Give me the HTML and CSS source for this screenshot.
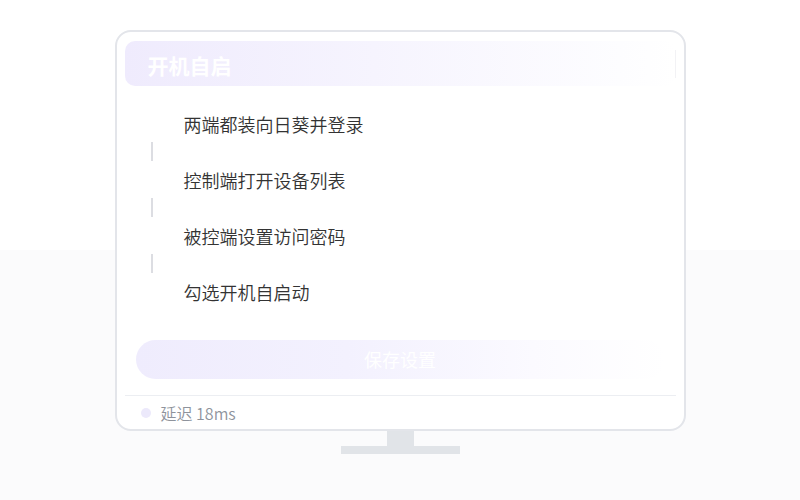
FILE: index.html
```html
<!DOCTYPE html>
<html lang="zh-CN">
<head>
	<meta charset="UTF-8">
	<title>开机自启</title>
	<link rel="stylesheet" href="styles.css">
</head>
<body>
	<div class="stage">
		<div class="monitor">
			<div class="panel-head">
				<span class="panel-title">开机自启</span>
				<span class="panel-extra"></span>
			</div>

			<ul class="steps">
				<li class="step">两端都装向日葵并登录</li>
				<li class="step-line"></li>
				<li class="step">控制端打开设备列表</li>
				<li class="step-line"></li>
				<li class="step">被控端设置访问密码</li>
				<li class="step-line"></li>
				<li class="step">勾选开机自启动</li>
			</ul>

			<a class="save-btn" href="#">保存设置</a>

			<div class="status">
				<span class="status-dot"></span>
				<span class="status-text">延迟 18ms</span>
			</div>
		</div>
		<div class="neck"></div>
		<div class="base"></div>
	</div>
</body>
</html>
```

FILE: styles.css
```css
*{
	margin: 0;
	padding: 0;
	box-sizing: border-box;
}
html,body{
	height: 100%;
}
body{
	font-family: "Noto Sans CJK SC", "Noto Sans", sans-serif;
	background: linear-gradient(#fff 0, #fff 250px, #fbfbfc 250px, #fbfbfc 100%);
	color: #333;
}
.stage{
	padding-top: 30px;
	display: flex;
	flex-direction: column;
	align-items: center;
}
.monitor{
	width: 571px;
	height: 401px;
	background: #fff;
	border: 2px solid #e3e5ea;
	border-radius: 16px;
	display: flex;
	flex-direction: column;
	padding: 9px 8px 0;
}
.panel-head{
	height: 45px;
	border-radius: 10px;
	background: linear-gradient(90deg, #efebfd 0%, #f6f4fe 45%, #fdfdff 90%, #fff 100%);
	display: flex;
	align-items: center;
	justify-content: space-between;
	padding: 0 0 0 23px;
}
.panel-title{
	color: #fff;
	font-size: 21px;
	font-weight: 700;
	line-height: 26px;
	margin-top: 2px;
}
.panel-extra{
	width: 1px;
	height: 28px;
	background: #f2f2f5;
}
.steps{
	list-style: none;
	margin-top: 26px;
	padding-left: 18px;
}
.step{
	font-size: 18px;
	font-weight: 350;
	line-height: 24px;
	padding-left: 41px;
	color: #333;
}
.step-line{
	width: 2px;
	height: 19px;
	margin: 6px 0 7px 8px;
	background: #dcdde2;
}
.save-btn{
	display: block;
	margin: 36px 11px 0;
	height: 39px;
	border-radius: 20px;
	background: linear-gradient(90deg, #efecfd 0%, #f3f1fe 40%, #fbfaff 75%, #fff 100%);
	color: #fff;
	font-size: 18px;
	line-height: 39px;
	text-align: center;
	text-decoration: none;
}
.status{
	margin-top: 16px;
	border-top: 1px solid #eceef2;
	height: 33px;
	display: flex;
	align-items: center;
	padding-left: 16px;
	padding-top: 2px;
}
.status-dot{
	width: 10px;
	height: 10px;
	border-radius: 50%;
	background: #ece9fb;
	margin-right: 10px;
}
.status-text{
	font-size: 16px;
	font-weight: 350;
	color: #8e939c;
}
.neck{
	width: 27px;
	height: 15px;
	background: #e1e4e8;
}
.base{
	width: 119px;
	height: 8px;
	background: #e1e4e8;
}
```
